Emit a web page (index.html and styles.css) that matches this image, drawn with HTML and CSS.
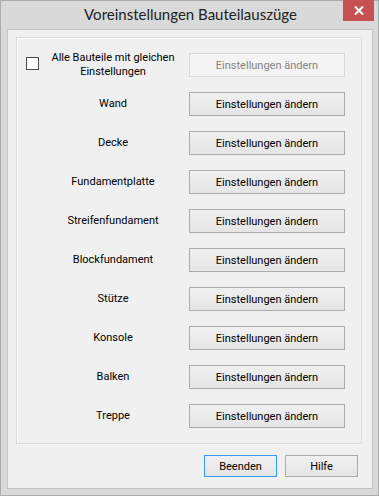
FILE: index.html
```html
<!DOCTYPE html>
<html lang="de">

<head>
  <meta charset="UTF-8">
  <title>Voreinstellungen Bauteilauszüge</title>
  <link rel="stylesheet" href="styles.css">
</head>

<body>
  <div class="win">
    <div class="titlebar">
      <span></span>
      <span class="title">Voreinstellungen Bauteilauszüge</span>
      <button class="close" type="button" aria-label="Schließen">
        <svg width="10" height="9" viewBox="0 0 10 9">
          <path d="M1 0.5 L9 8.5 M9 0.5 L1 8.5" stroke="#fff" stroke-width="2" fill="none" />
        </svg>
      </button>
    </div>

    <div class="client">
      <div class="group">
        <div class="row">
          <div class="lbl lbl-check">
            <span class="check"></span>
            <span class="lbl-text">Alle Bauteile mit gleichen Einstellungen</span>
          </div>
          <button class="btn" disabled>Einstellungen ändern</button>
        </div>
        <div class="row">
          <div class="lbl">Wand</div>
          <button class="btn">Einstellungen ändern</button>
        </div>
        <div class="row">
          <div class="lbl">Decke</div>
          <button class="btn">Einstellungen ändern</button>
        </div>
        <div class="row">
          <div class="lbl">Fundamentplatte</div>
          <button class="btn">Einstellungen ändern</button>
        </div>
        <div class="row">
          <div class="lbl">Streifenfundament</div>
          <button class="btn">Einstellungen ändern</button>
        </div>
        <div class="row">
          <div class="lbl">Blockfundament</div>
          <button class="btn">Einstellungen ändern</button>
        </div>
        <div class="row">
          <div class="lbl">Stütze</div>
          <button class="btn">Einstellungen ändern</button>
        </div>
        <div class="row">
          <div class="lbl">Konsole</div>
          <button class="btn">Einstellungen ändern</button>
        </div>
        <div class="row">
          <div class="lbl">Balken</div>
          <button class="btn">Einstellungen ändern</button>
        </div>
        <div class="row">
          <div class="lbl">Treppe</div>
          <button class="btn">Einstellungen ändern</button>
        </div>
      </div>

      <div class="footer">
        <button class="btn btn-sm btn-default">Beenden</button>
        <button class="btn btn-sm">Hilfe</button>
      </div>
    </div>
  </div>
</body>

</html>
```

FILE: styles.css
```css
html,
body {
  margin: 0;
  padding: 0;
}

body {
  font-family: Roboto, "Liberation Sans", sans-serif;
  font-size: 11px;
  color: #000;
  background: #fff;
}

.win {
  width: 379px;
  height: 496px;
  box-sizing: border-box;
  border: 1px solid #acacac;
  background-color: #d9d9d9;
  padding: 0 5px 6px 6px;
  display: flex;
  flex-direction: column;
}

.titlebar {
  height: 28px;
  display: grid;
  grid-template-columns: 1fr auto 1fr;
  align-items: start;
  margin-right: -1px;
}

.title {
  font-family: Lato, "Liberation Sans", sans-serif;
  font-size: 15px;
  line-height: 15px;
  color: #222;
  padding-top: 6px;
  white-space: nowrap;
}

.close {
  justify-self: end;
  width: 31px;
  height: 21px;
  margin-top: -1px;
  border: 0;
  padding: 0;
  background-color: #c75050;
  display: flex;
  align-items: center;
  justify-content: center;
}

.client {
  flex: 1;
  border: 1px solid #c4c4c4;
  background-color: #f0f0f0;
  display: flex;
  flex-direction: column;
}

.group {
  margin: 7px 10px 0 8px;
  border: 1px solid #dcdcdc;
  box-shadow: inset 1px 1px 0 #fff;
  padding: 15px 16px 15px 9px;
  display: flex;
  flex-direction: column;
  gap: 15px;
}

.row {
  display: flex;
  align-items: center;
  height: 24px;
}

.lbl {
  width: 163px;
  box-sizing: border-box;
  padding-left: 13px;
  padding-right: 2px;
  text-align: center;
  line-height: 14px;
}

.lbl-check {
  display: flex;
  align-items: center;
  padding-left: 0;
}

.lbl-check .lbl-text {
  flex: 1;
}

.check {
  width: 11px;
  height: 11px;
  border: 1px solid #4a4a4a;
  background-color: #fff;
  margin-top: -3px;
}

.btn {
  width: 156px;
  height: 24px;
  box-sizing: border-box;
  border: 1px solid #acacac;
  background: linear-gradient(#f0f0f0, #e5e5e5);
  font: inherit;
  color: #000;
  padding: 0;
}

.btn:disabled {
  border-color: #d9d9d9;
  background: #f4f4f4;
  color: #838383;
}

.footer {
  display: flex;
  justify-content: flex-end;
  gap: 8px;
  margin: 11px 14px 0 0;
}

.btn-sm {
  width: 73px;
  height: 22px;
}

.btn-default {
  border-color: #3399ff;
}
```
